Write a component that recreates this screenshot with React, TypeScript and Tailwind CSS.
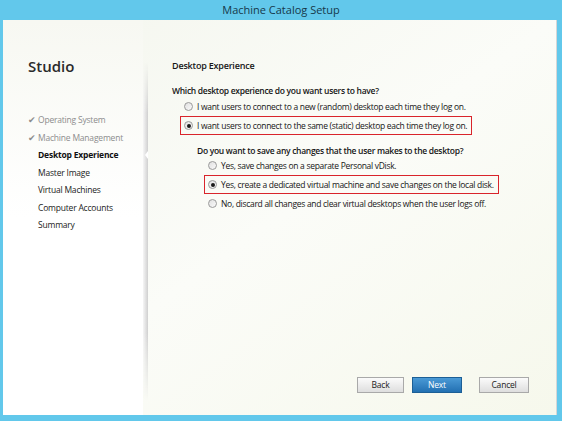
import { ReactNode } from "react";

const steps = [
    { label: "Operating System", done: true },
    { label: "Machine Management", done: true },
    { label: "Desktop Experience", current: true },
    { label: "Master Image" },
    { label: "Virtual Machines" },
    { label: "Computer Accounts" },
    { label: "Summary" },
];

function Radio({ checked }: { checked?: boolean }) {
    return (
        <span className="flex h-[9px] w-[9px] shrink-0 items-center justify-center rounded-full border border-[#9a9a9a] bg-gradient-to-br from-[#e0e0e0] to-[#fafafa]">
            {checked && <span className="h-[4px] w-[4px] rounded-full bg-[#1a1a1a]" />}
        </span>
    );
}

function Option({ checked, boxed, children }: { checked?: boolean; boxed?: boolean; children: ReactNode }) {
    return (
        <div
            className={`flex items-center gap-[4px] py-[3px] pl-[3px] pr-[4px] ${
                boxed ? "border-[1.5px] border-[#d9242b]" : "border-[1.5px] border-transparent"
            }`}
        >
            <Radio checked={checked} />
            <span>{children}</span>
        </div>
    );
}

function Button({ primary, className, children }: { primary?: boolean; className?: string; children: ReactNode }) {
    return (
        <button
            className={`h-[16px] border text-[8.5px] leading-none tracking-[-0.2px] ${className ?? ""} ${
                primary
                    ? "border-[#1c5f96] bg-gradient-to-b from-[#4a9ad6] to-[#2270b2] text-white"
                    : "border-[#a9a9a9] bg-gradient-to-b from-[#fbfbfb] to-[#dedede] text-[#222]"
            }`}
        >
            {children}
        </button>
    );
}

export default function App() {
    return (
        <div
            className="flex h-[421px] w-[562px] flex-col bg-[#62c8eb] text-[#161616]"
            style={{ fontFamily: '"Open Sans", "Liberation Sans", sans-serif' }}
        >
            <div className="flex h-[20px] items-center justify-center text-[11px] text-[#16384a]">
                Machine Catalog Setup
            </div>
            <div className="mb-[6px] ml-[3px] mr-[5px] flex flex-1 border-r border-[#d6d6d6] bg-gradient-to-br from-[#f4f6ee] via-[#fbfcf8] to-[#f6f8ec]">
                <aside className="relative flex w-[140px] flex-col bg-gradient-to-b from-[#f7f8f2] via-white to-white pl-[25px] pt-[39px]">
                    <h1 className="text-[15px] font-semibold leading-none text-[#2a2a2a]">Studio</h1>
                    <ul className="mt-[40px] flex flex-col gap-[6px] text-[8.5px] leading-[11.5px] tracking-[-0.2px]">
                        {steps.map((s) => (
                            <li key={s.label} className="flex items-center">
                                <span className="w-[10px] text-[8.5px] text-[#8d8d8d]">{s.done ? "✔" : ""}</span>
                                <span
                                    className={
                                        s.done
                                            ? "text-[#8d8d8d]"
                                            : s.current
                                            ? "font-bold text-[#111]"
                                            : "text-[#222]"
                                    }
                                >
                                    {s.label}
                                </span>
                            </li>
                        ))}
                    </ul>
                </aside>
                <div className="relative mb-[14px] mt-[42px] w-[5px] bg-gradient-to-r from-[#f6f6f6] to-[#d0d0d0] [mask-image:linear-gradient(to_bottom,transparent,black_15%,black_80%,transparent)]">
                    <span className="absolute right-0 top-[89px] h-0 w-0 border-y-[4px] border-r-[3px] border-y-transparent border-r-white" />
                </div>
                <main className="flex flex-1 flex-col pl-[24px] pr-[24px] pt-[40px] text-[8.5px] leading-[11px] tracking-[-0.3px]">
                    <h2 className="text-[9px] font-semibold tracking-[-0.2px]">Desktop Experience</h2>
                    <p className="mt-[14px] font-semibold">Which desktop experience do you want users to have?</p>
                    <div className="ml-[8px] mt-[1px] flex flex-col items-start">
                        <Option>I want users to connect to a new (random) desktop each time they log on.</Option>
                        <Option checked boxed>
                            I want users to connect to the same (static) desktop each time they log on.
                        </Option>
                    </div>
                    <p className="ml-[25px] mt-[10px] font-semibold">
                        Do you want to save any changes that the user makes to the desktop?
                    </p>
                    <div className="ml-[32px] flex flex-col items-start">
                        <Option>Yes, save changes on a separate Personal vDisk.</Option>
                        <Option checked boxed>
                            Yes, create a dedicated virtual machine and save changes on the local disk.
                        </Option>
                        <Option>No, discard all changes and clear virtual desktops when the user logs off.</Option>
                    </div>
                    <div className="mb-[22px] mt-auto flex justify-end pr-[3px]">
                        <Button className="w-[47px]">Back</Button>
                        <Button primary className="ml-[8px] w-[50px]">
                            Next
                        </Button>
                        <Button className="ml-[17px] w-[50px]">Cancel</Button>
                    </div>
                </main>
            </div>
        </div>
    );
}
